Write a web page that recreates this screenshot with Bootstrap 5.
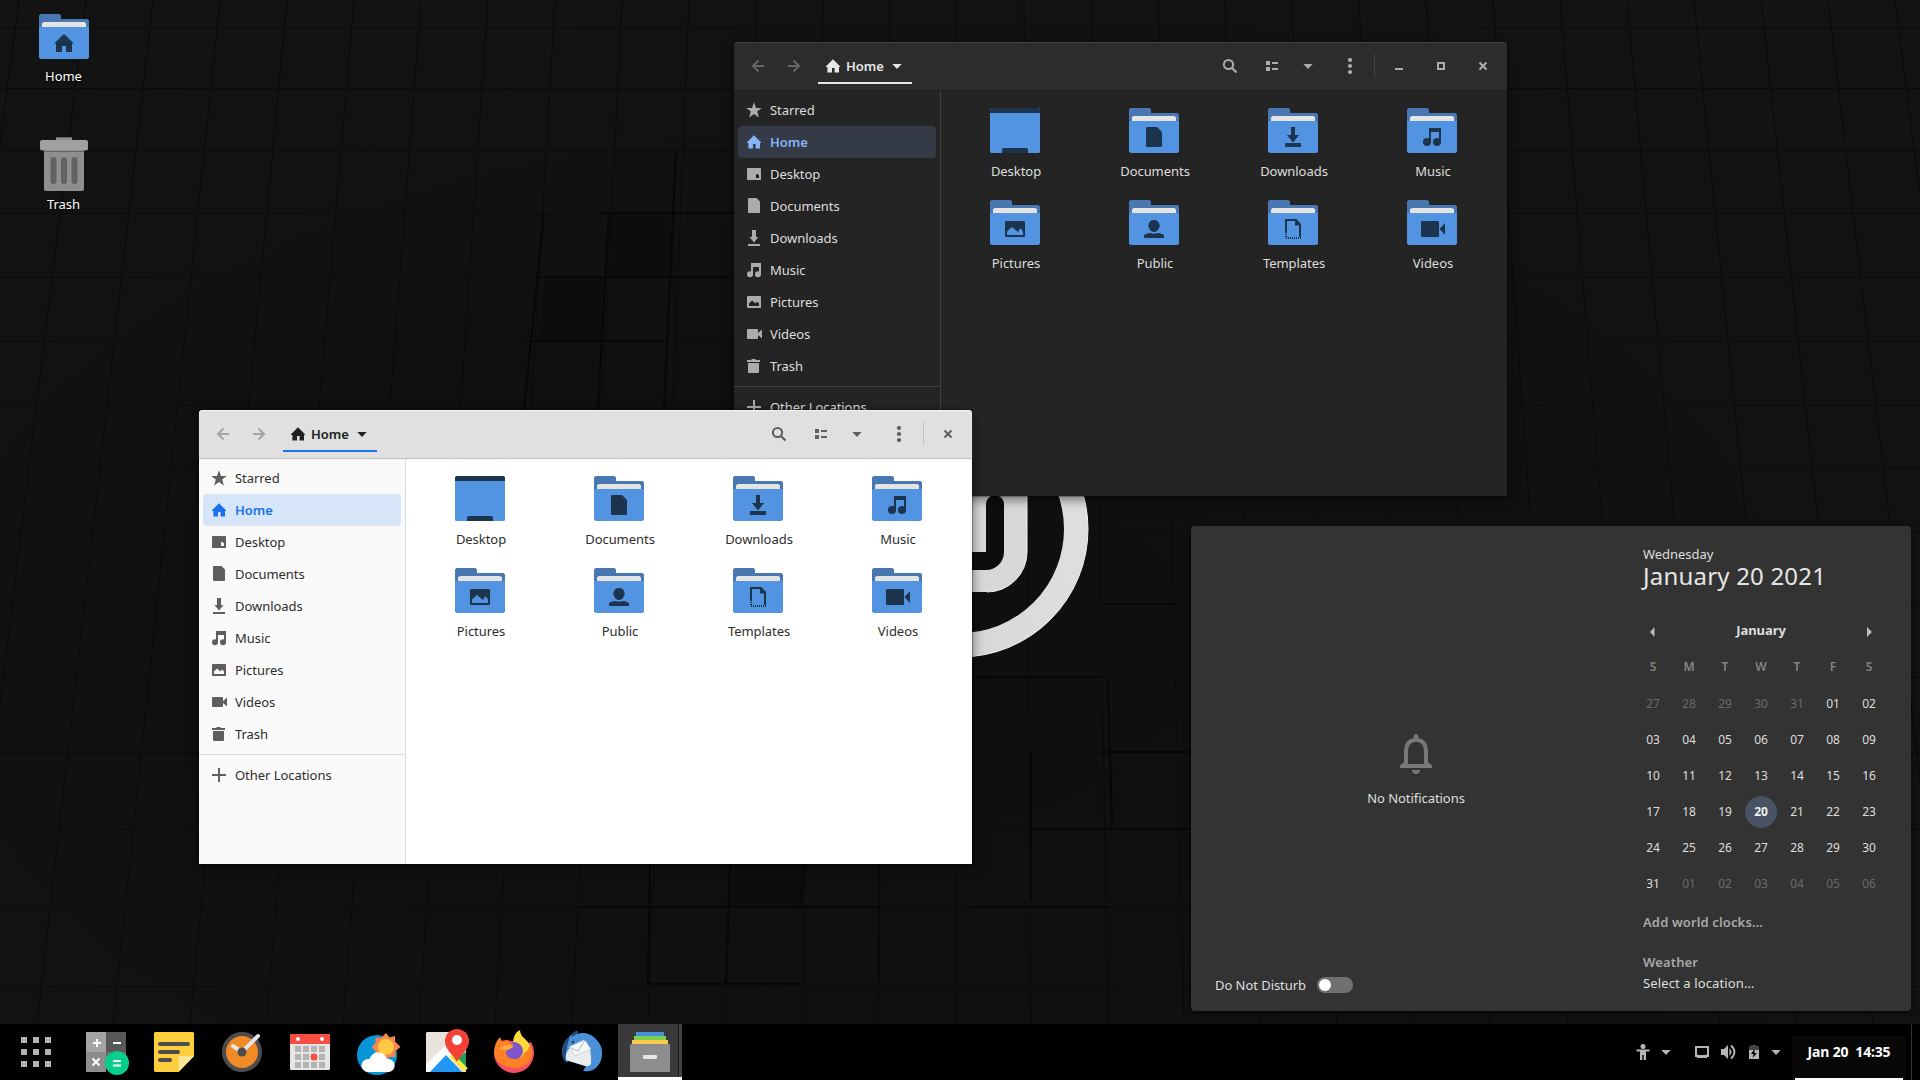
<!DOCTYPE html>
<html lang="en">
<head>
<meta charset="utf-8">
<title>Desktop</title>
<link href="https://cdn.jsdelivr.net/npm/bootstrap@5.3.0/dist/css/bootstrap.min.css" rel="stylesheet">
<style>
body{width:1920px;height:1080px;background:#111;font-family:"Noto Sans",sans-serif;font-size:13px;line-height:20px;letter-spacing:-.05px;color:#dedede}
svg{display:block;flex:none}
.ic{width:16px;height:16px;fill:currentColor}
.wallpaper{inset:0}
.desk-item{width:100px;color:#fff;text-shadow:0 1px 2px #000}
.desk-item span{margin-right:1px}
.desk-home{left:14px;top:14px}
.desk-home span{margin-top:7px}
.desk-trash{left:14px;top:137px}
.desk-trash span{margin-top:2px}
.win{width:773px;height:454px;border-radius:4px 4px 0 0;box-shadow:0 3px 12px rgba(0,0,0,.55),0 0 0 1px rgba(0,0,0,.25)}
.win-dark{left:734px;top:42px;background:#242424;--bar:#2c2c2c;--top:#444;--edge:#202020;--fg:#dedede;--icon:#acacac;--off:#666;--line:#404040;--side:#242424;--sel:#343a46;--selfg:#8ab4f8;--tab:#e6e6e6;--strong:#e6e6e6}
.win-light{left:199px;top:410px;background:#fff;--bar:#e0e0e0;--top:#f4f4f4;--edge:#bcbcbc;--fg:#2d2d2d;--icon:#5f5f5f;--off:#a4a4a4;--line:#dcdcdc;--side:#fafafa;--sel:#d6e5f8;--selfg:#1a73e8;--tab:#1a73e8;--strong:#212121}
.titlebar{height:48px;background:var(--bar);box-shadow:inset 0 1px var(--top),0 1px 1px var(--edge);color:var(--icon);padding:0 3px 0 6px;border-radius:4px 4px 0 0;position:relative;z-index:1}
.hbtn{width:36px;height:36px;display:flex;align-items:center;justify-content:center}
.hbtn.off{color:var(--off)}
.w42{width:42px}.w30{width:30px}
.more{margin-left:6px}
.tab-home{height:36px;width:94px;margin-left:6px;padding:0 7px;color:var(--strong);box-shadow:inset 0 -2px var(--tab);font-weight:600;gap:5px}
.vsep{width:1px;height:24px;background:var(--line);margin:0 3px}
.win-light .vsep{background:#c2c2c2}
.places{width:207px;background:var(--side);border-right:1px solid var(--line);padding-top:4px;color:var(--fg)}
.place{height:32px;margin:0 4px;padding-left:8px;gap:8px;border-radius:4px}
.place svg{color:var(--icon)}
.place.on,.place.on svg{color:var(--selfg)}
.place.on{background:var(--sel);font-weight:600}
.psep{height:1px;background:var(--line);margin:4px 0}
.files{padding:18px 5px 0 4px;color:var(--fg);align-content:flex-start}
.file{width:139px;height:92px}
.fold{width:50px;height:45px}
.files .fold{margin-left:1px;margin-right:1px}
.file .fname{margin:8px 0 0 3px}
.panel{left:1191px;top:526px;width:720px;height:485px;background:#333;border-radius:4px;box-shadow:0 2px 6px rgba(0,0,0,.6)}
.notes{width:444px;padding:0 0 16px 24px}
.empty{padding-right:18px;padding-top:40px}
.empty span{margin-top:14px}
.switch-off{width:36px;height:16px;border-radius:8px;background:#707070;padding:2px;margin-left:11px}
.switch-off i{width:12px;height:12px;border-radius:50%;background:#fff}
.cal{width:252px;padding-top:18px}
.cal .pad{padding-left:8px}
.bigdate{font-size:24px;line-height:28px;letter-spacing:.2px;margin-top:-2px;color:#e6e6e6}
.month{height:36px;margin-top:23px}
.month b{padding-bottom:2px}
.cell{width:36px;height:36px;display:flex;align-items:center;justify-content:center;font-size:12px}
.dow{color:#858585;font-weight:600;margin-bottom:1px}
.dim{color:#6a6a6a}
.today{width:32px;height:32px;border-radius:50%;background:#485264;color:#f0f0f0;font-weight:700}
.soft{color:#a8a8a8;font-weight:600;letter-spacing:.13px}
.clocks{margin-top:10px}
.weather{margin:20px 0 1px}
.place-pick{letter-spacing:.12px}
.dock{left:0;top:1024px;width:1920px;height:56px;background:#000;color:#b6b6b6}
.apps-btn{width:72px;padding-left:21px}
.app{width:68px;height:56px}
.app svg{width:48px;height:48px}
.app-on{width:64px;height:56px;margin-left:2px;background:linear-gradient(90deg,#3a3a3a 60px,#1d1d1d 60px,#1d1d1d 61px,#454545 61px);border-bottom:3px solid #fff;padding:3px 0 0}
.t-person{margin-right:7px}
.t-screen{margin:0 10px 0 20px}
.t-sound{margin-right:10px}
.t-power{margin-right:6px}
.tray{margin-right:8px}
.clockbox{width:114px;height:44px;background:#080808;color:#fff;font-size:14px;font-weight:700;letter-spacing:-.17px;padding:2px 3px 0}
.clockbox .under{height:2px;background:#fff}
.showdesk{width:9px;height:56px;border-left:1px solid #333;margin-left:5px}
</style>
</head>
<body class="overflow-hidden position-relative">

<svg width="0" height="0" class="position-absolute">
<defs>
<symbol id="home" viewBox="0 0 16 16"><path d="M8 1.2 1 8.2V9h1.4v5.4H7V10h2.6v4.4H14V9h1V8.200z"/></symbol>
<symbol id="star" viewBox="0 0 16 16"><path d="M8 .3 10 5.900l5.800.1-4.600 3.600 1.700 5.900L8 12.100 3.100 15.500 4.800 9.600.3 6 6 5.900z"/></symbol>
<symbol id="desk" viewBox="0 0 16 16"><path fill-rule="evenodd" d="M2 2h12a1 1 0 0 1 1 1v10a1 1 0 0 1-1 1H2a1 1 0 0 1-1-1V3a1 1 0 0 1 1-1zm8 6v4h3V9h-1V8z"/></symbol>
<symbol id="doc" viewBox="0 0 16 16"><path d="M3 0h7.500L14 3.500V14a1 1 0 0 1-1 1H3a1 1 0 0 1-1-1V1a1 1 0 0 1 1-1z"/></symbol>
<symbol id="down" viewBox="0 0 16 16"><path d="M6 0h4v7h2.500L8 12.500 3.500 7H6zM2 14h12v2H2z"/></symbol>
<symbol id="music" viewBox="0 0 16 16"><path d="M5 1h10v11h-2V4H7v8H5zM5 2h9v3H5z"/><circle cx="4" cy="12.200" r="3"/><circle cx="12" cy="12.200" r="3"/></symbol>
<symbol id="pic" viewBox="0 0 16 16"><path fill-rule="evenodd" d="M2 2h12a1 1 0 0 1 1 1v10a1 1 0 0 1-1 1H2a1 1 0 0 1-1-1V3a1 1 0 0 1 1-1zm1 10h10V9.500L11 7.500 9.500 9.500 6 6.500 3 9.500z"/></symbol>
<symbol id="vid" viewBox="0 0 16 16"><path d="M2 3h9a1 1 0 0 1 1 1v3l4-3.500v9L12 9v3a1 1 0 0 1-1 1H2a1 1 0 0 1-1-1V4a1 1 0 0 1 1-1z"/></symbol>
<symbol id="bin" viewBox="0 0 16 16"><path d="M1 2h4l1-1h3l1 1h4v2H1zM2 5h11v9a1 1 0 0 1-1 1H3a1 1 0 0 1-1-1z"/></symbol>
<symbol id="plus" viewBox="0 0 16 16"><path d="M7 1h2v6h6v2H9v6H7V9H1V7h6z"/></symbol>
<symbol id="back" viewBox="0 0 16 16"><path d="M8.500 2.500 3 8l5.500 5.500M3 8h11" fill="none" stroke="currentColor" stroke-width="2"/></symbol>
<symbol id="fwd" viewBox="0 0 16 16"><path d="M7.500 2.500 13 8l-5.500 5.500M13 8H2" fill="none" stroke="currentColor" stroke-width="2"/></symbol>
<symbol id="caret" viewBox="0 0 16 16"><path d="M3.300 6h9.400L8 11z"/></symbol>
<symbol id="find" viewBox="0 0 16 16"><circle cx="6.500" cy="6.500" r="4.600" fill="none" stroke="currentColor" stroke-width="2"/><path d="m9.500 9.500 5 5" stroke="currentColor" stroke-width="2.200"/></symbol>
<symbol id="list" viewBox="0 0 16 16"><path d="M2 3h4v4H2zM2 9h4v4H2zM8 4h6v2H8zM8 10h6v2H8z"/></symbol>
<symbol id="dots" viewBox="0 0 16 16"><circle cx="8" cy="2" r="2.100"/><circle cx="8" cy="8" r="2.100"/><circle cx="8" cy="14" r="2.100"/></symbol>
<symbol id="shut" viewBox="0 0 16 16"><path d="m4.500 4.500 7 7m0-7-7 7" stroke="currentColor" stroke-width="2"/></symbol>
<symbol id="maxi" viewBox="0 0 16 16"><path d="M5 5h6v6H5z" fill="none" stroke="currentColor" stroke-width="2"/></symbol>
<symbol id="mini" viewBox="0 0 16 16"><path d="M4 10h8v2H4z"/></symbol>
<symbol id="folder" viewBox="0 0 50 45"><path fill="#4877b1" d="M1.500 0H20.500L22 1.500V5H48.500L50 6.500V20H0V1.500z"/><path fill="#e4e4e4" d="M4.500 8h41L47 9.500V15H3V9.500z"/><path fill="#5294e2" d="M0 13.500.5 13h49l.5.5V43.500L48.500 45h-47L0 43.500z"/></symbol>
<symbol id="f-desktop" viewBox="0 0 50 45"><rect width="50" height="45" rx="1.500" fill="#5294e2"/><path fill="#1d344f" d="M1.500 0h47L50 1.500V5H0V1.500zM12 45v-3.500q0-1.500 1.500-1.500h23q1.500 0 1.500 1.500V45z"/></symbol>
<symbol id="f-home" viewBox="0 0 50 45"><use href="#folder"/><path fill="#1d344f" d="m25 20 10 9.500h-2V38h-6v-6h-4v6h-6v-8.500h-2z"/></symbol>
<symbol id="f-doc" viewBox="0 0 50 45"><use href="#folder"/><path fill="#1d344f" d="M18 19h10l5 5v14q0 1-1 1H18q-1 0-1-1V20q0-1 1-1z"/></symbol>
<symbol id="f-down" viewBox="0 0 50 45"><use href="#folder"/><path fill="#1d344f" d="M23 19h4v8h4l-6 7.500-6-7.500h4zM17 35h16v4H17z"/></symbol>
<symbol id="f-music" viewBox="0 0 50 45"><use href="#folder"/><path fill="#1d344f" d="M22 20h12v14h-2V24h-8v10h-2z"/><circle cx="20" cy="34" r="4" fill="#1d344f"/><circle cx="30" cy="34" r="4" fill="#1d344f"/></symbol>
<symbol id="f-pic" viewBox="0 0 50 45"><use href="#folder"/><path fill="#1d344f" fill-rule="evenodd" d="M16 21h18q1 0 1 1v14q0 1-1 1H16q-1 0-1-1V22q0-1 1-1zm1 14h16v-3.500L30.500 28l-2.500 4-6-5-5 4.500z"/></symbol>
<symbol id="f-pub" viewBox="0 0 50 45"><use href="#folder"/><path fill="#1d344f" d="M25 20c3.300 0 5 2 5.300 4.500l.7 1-.9 2C29.500 30 27.500 32 25 32s-4.500-2-5.100-4.500l-.9-2 .7-1C20 22 21.700 20 25 20zM15 38v-2.500q1-2 6.500-2.500 3.500 1.500 7 0 5.500.5 6.500 2.500V38z"/></symbol>
<symbol id="f-tpl" viewBox="0 0 50 45"><use href="#folder"/><path fill="none" stroke="#1d344f" stroke-width="2" d="M18 32V20h10l4 4.500V37"/><path fill="#1d344f" d="M27 20v5.500h5.500z"/><path fill="none" stroke="#1d344f" stroke-width="2" stroke-dasharray="1 1" d="M18 32v6h15"/></symbol>
<symbol id="f-vid" viewBox="0 0 50 45"><use href="#folder"/><path fill="#1d344f" d="M15 21h16q1 0 1 1v14q0 1-1 1H15q-1 0-1-1V22q0-1 1-1zM38 23v12l-5.500-6z"/></symbol>
</defs>
</svg>

<!-- Wallpaper: tiled wall and round emblem -->
<svg class="wallpaper position-absolute" width="1920" height="1080" viewBox="0 0 1920 1080">
<defs><radialGradient id="wall" cx=".45" cy=".6" r=".7"><stop offset="0" stop-color="#0f0f0f"/><stop offset=".45" stop-color="#101010"/><stop offset="1" stop-color="#131313"/></radialGradient>
<linearGradient id="em" x1="0" x2="1"><stop offset="0" stop-color="#bbb"/><stop offset=".65" stop-color="#d9d9d9"/><stop offset="1" stop-color="#dedede"/></linearGradient></defs>
<rect width="1920" height="1080" fill="url(#wall)"/>
<path stroke="#0b0b0b" stroke-width="1" fill="none" d="M19 0-116 1024M86 0-39 1024M153 0 37 1024M220 0 113 1024M287 0 190 1024M354 0 266 1024M421 0 343 1024M488 0 419 1024M555 0 495 1024M622 0 572 1024M689 0 648 1024M756 0 725 1024M823 0 802 1024M890 0 878 1024M957 0 955 1024M1024 0 1031 1024M1091 0 1108 1024M1158 0 1184 1024M1225 0 1261 1024M1292 0 1337 1024M1359 0 1414 1024M1426 0 1490 1024M1493 0 1567 1024M1560 0 1643 1024M1627 0 1720 1024M1694 0 1796 1024M1761 0 1873 1024M1828 0 1949 1024M1895 0 2026 1024"/>
<path stroke="#0b0b0b" stroke-width="1" fill="none" d="M0 27.500H1920M0 88.500H1920M0 150.500H1920M0 213.500H1920M0 277.500H1920M0 341.500H1920M0 405.500H1920M0 468.500H1920M0 531.500H1920M0 603.500H1920M0 677.500H1920M0 752.500H1920M0 829.500H1920M0 907.500H1920M0 986.500H1920"/>
<path stroke="#070707" stroke-width="2" fill="none" d="M544 213 524 410M609 213 598 410M676 150 664 410M541 277H730M602 213H734M530 341H664M650 864 648 984M730 864 726 984M804 864 800 907M580 907H880M648 984H800M879 864V980M972 677H1101M1103 604H1176M1101 752H1190M1108 680 1112 829M1031 829H1190M972 907H1110M1031 752V900"/>
<path fill="#0b0b0b" opacity=".4" d="M609 213H676L672 277H604zM545 277H605L600 341H538zM735 864H804L802 907H730z"/>
<g fill="none"><circle cx="960" cy="529" r="116" stroke="url(#em)" stroke-width="24"/><circle cx="960" cy="529" r="128" stroke="#f2f2f2"/></g>
<path fill="#d8d8d8" d="M893 440h134v112a40 40 0 0 1-40 40H893z"/><path fill="#0d0d0d" d="M986 552V504a9 9 0 0 1 18 0v48a18 18 0 0 1-18 18H920V552z"/>
<path fill="none" stroke="#f2f2f2" d="M1027 490v62a40 40 0 0 1-40 40"/>
</svg>

<div class="desk-item desk-home position-absolute d-flex flex-column align-items-center">
<svg class="fold"><use href="#f-home"/></svg><span>Home</span>
</div>
<div class="desk-item desk-trash position-absolute d-flex flex-column align-items-center">
<svg width="48" height="55" viewBox="0 0 48 55"><path fill="#8e8e8e" d="M16 0h16v4H16zM4 12h40v40q0 2-2 2H6q-2 0-2-2z"/><path fill="#666" d="M4 13.500h40v1.500H4zM16 0h16v1H16z"/><rect y="3" width="48" height="10.500" rx="2" fill="#a0a0a0"/><g fill="#626262"><rect x="10.500" y="20" width="6" height="27" rx="3"/><rect x="21" y="20" width="6" height="27" rx="3"/><rect x="31.500" y="20" width="6" height="27" rx="3"/></g></svg>
<span>Trash</span>
</div>

<!-- Files, dark -->
<section class="win win-dark position-absolute d-flex flex-column">
<header class="titlebar d-flex align-items-center">
<span class="hbtn off"><svg class="ic"><use href="#back"/></svg></span><span class="hbtn off"><svg class="ic"><use href="#fwd"/></svg></span>
<div class="tab-home d-flex align-items-center"><svg class="ic"><use href="#home"/></svg><span>Home</span><svg class="ic ms-auto"><use href="#caret"/></svg></div>
<span class="hbtn w42 ms-auto"><svg class="ic"><use href="#find"/></svg></span><span class="hbtn w42"><svg class="ic"><use href="#list"/></svg></span><span class="hbtn w30"><svg class="ic"><use href="#caret"/></svg></span>
<span class="hbtn w42 more"><svg class="ic"><use href="#dots"/></svg></span><span class="vsep"></span>
<span class="hbtn w42"><svg class="ic"><use href="#mini"/></svg></span><span class="hbtn w42"><svg class="ic"><use href="#maxi"/></svg></span><span class="hbtn w42"><svg class="ic"><use href="#shut"/></svg></span>
</header>
<div class="d-flex flex-grow-1">
<nav class="places flex-shrink-0">
<div class="place d-flex align-items-center"><svg class="ic"><use href="#star"/></svg>Starred</div>
<div class="place on d-flex align-items-center"><svg class="ic"><use href="#home"/></svg>Home</div>
<div class="place d-flex align-items-center"><svg class="ic"><use href="#desk"/></svg>Desktop</div>
<div class="place d-flex align-items-center"><svg class="ic"><use href="#doc"/></svg>Documents</div>
<div class="place d-flex align-items-center"><svg class="ic"><use href="#down"/></svg>Downloads</div>
<div class="place d-flex align-items-center"><svg class="ic"><use href="#music"/></svg>Music</div>
<div class="place d-flex align-items-center"><svg class="ic"><use href="#pic"/></svg>Pictures</div>
<div class="place d-flex align-items-center"><svg class="ic"><use href="#vid"/></svg>Videos</div>
<div class="place d-flex align-items-center"><svg class="ic"><use href="#bin"/></svg>Trash</div>
<div class="psep"></div>
<div class="place d-flex align-items-center"><svg class="ic"><use href="#plus"/></svg>Other Locations</div>
</nav>
<main class="files d-flex flex-wrap flex-grow-1">
<div class="file d-flex flex-column align-items-center"><svg class="fold"><use href="#f-desktop"/></svg><span class="fname">Desktop</span></div>
<div class="file d-flex flex-column align-items-center"><svg class="fold"><use href="#f-doc"/></svg><span class="fname">Documents</span></div>
<div class="file d-flex flex-column align-items-center"><svg class="fold"><use href="#f-down"/></svg><span class="fname">Downloads</span></div>
<div class="file d-flex flex-column align-items-center"><svg class="fold"><use href="#f-music"/></svg><span class="fname">Music</span></div>
<div class="file d-flex flex-column align-items-center"><svg class="fold"><use href="#f-pic"/></svg><span class="fname">Pictures</span></div>
<div class="file d-flex flex-column align-items-center"><svg class="fold"><use href="#f-pub"/></svg><span class="fname">Public</span></div>
<div class="file d-flex flex-column align-items-center"><svg class="fold"><use href="#f-tpl"/></svg><span class="fname">Templates</span></div>
<div class="file d-flex flex-column align-items-center"><svg class="fold"><use href="#f-vid"/></svg><span class="fname">Videos</span></div>
</main>
</div>
</section>

<!-- Files, light -->
<section class="win win-light position-absolute d-flex flex-column">
<header class="titlebar d-flex align-items-center">
<span class="hbtn off"><svg class="ic"><use href="#back"/></svg></span><span class="hbtn off"><svg class="ic"><use href="#fwd"/></svg></span>
<div class="tab-home d-flex align-items-center"><svg class="ic"><use href="#home"/></svg><span>Home</span><svg class="ic ms-auto"><use href="#caret"/></svg></div>
<span class="hbtn w42 ms-auto"><svg class="ic"><use href="#find"/></svg></span><span class="hbtn w42"><svg class="ic"><use href="#list"/></svg></span><span class="hbtn w30"><svg class="ic"><use href="#caret"/></svg></span>
<span class="hbtn w42 more"><svg class="ic"><use href="#dots"/></svg></span><span class="vsep"></span>
<span class="hbtn w42"><svg class="ic"><use href="#shut"/></svg></span>
</header>
<div class="d-flex flex-grow-1">
<nav class="places flex-shrink-0">
<div class="place d-flex align-items-center"><svg class="ic"><use href="#star"/></svg>Starred</div>
<div class="place on d-flex align-items-center"><svg class="ic"><use href="#home"/></svg>Home</div>
<div class="place d-flex align-items-center"><svg class="ic"><use href="#desk"/></svg>Desktop</div>
<div class="place d-flex align-items-center"><svg class="ic"><use href="#doc"/></svg>Documents</div>
<div class="place d-flex align-items-center"><svg class="ic"><use href="#down"/></svg>Downloads</div>
<div class="place d-flex align-items-center"><svg class="ic"><use href="#music"/></svg>Music</div>
<div class="place d-flex align-items-center"><svg class="ic"><use href="#pic"/></svg>Pictures</div>
<div class="place d-flex align-items-center"><svg class="ic"><use href="#vid"/></svg>Videos</div>
<div class="place d-flex align-items-center"><svg class="ic"><use href="#bin"/></svg>Trash</div>
<div class="psep"></div>
<div class="place d-flex align-items-center"><svg class="ic"><use href="#plus"/></svg>Other Locations</div>
</nav>
<main class="files d-flex flex-wrap flex-grow-1">
<div class="file d-flex flex-column align-items-center"><svg class="fold"><use href="#f-desktop"/></svg><span class="fname">Desktop</span></div>
<div class="file d-flex flex-column align-items-center"><svg class="fold"><use href="#f-doc"/></svg><span class="fname">Documents</span></div>
<div class="file d-flex flex-column align-items-center"><svg class="fold"><use href="#f-down"/></svg><span class="fname">Downloads</span></div>
<div class="file d-flex flex-column align-items-center"><svg class="fold"><use href="#f-music"/></svg><span class="fname">Music</span></div>
<div class="file d-flex flex-column align-items-center"><svg class="fold"><use href="#f-pic"/></svg><span class="fname">Pictures</span></div>
<div class="file d-flex flex-column align-items-center"><svg class="fold"><use href="#f-pub"/></svg><span class="fname">Public</span></div>
<div class="file d-flex flex-column align-items-center"><svg class="fold"><use href="#f-tpl"/></svg><span class="fname">Templates</span></div>
<div class="file d-flex flex-column align-items-center"><svg class="fold"><use href="#f-vid"/></svg><span class="fname">Videos</span></div>
</main>
</div>
</section>

<!-- Notifications and calendar -->
<section class="panel position-absolute d-flex">
<div class="notes d-flex flex-column">
<div class="empty flex-grow-1 d-flex flex-column align-items-center justify-content-center">
<svg width="32" height="40" viewBox="0 0 32 40" fill="#787878"><path fill-rule="evenodd" d="M16 0q2.500 0 2.500 4Q28 6 28 17v11l4 3.500V34H0v-2.500L4 28V17Q4 6 13.500 4 13.500 0 16 0zm0 8Q8 8 8 17v13h16V17Q24 8 16 8z"/><path d="M12 36h8q0 4-4 4t-4-4z"/></svg>
<span>No Notifications</span>
</div>
<div class="d-flex align-items-center"><span>Do Not Disturb</span><span class="switch-off d-flex"><i></i></span></div>
</div>
<div class="cal">
<div class="pad">Wednesday</div>
<div class="pad bigdate text-nowrap">January 20 2021</div>
<div class="month d-flex align-items-center">
<span class="cell"><svg width="16" height="16"><path fill="#bcbcbc" d="M9.500 4v10L5 9z"/></svg></span><b class="flex-grow-1 text-center">January</b><span class="cell"><svg width="16" height="16"><path fill="#bcbcbc" d="M6 4v10l5-5z"/></svg></span></div>
<div class="dow d-flex"><span class="cell">S</span><span class="cell">M</span><span class="cell">T</span><span class="cell">W</span><span class="cell">T</span><span class="cell">F</span><span class="cell">S</span></div>
<div class="d-flex"><span class="cell dim">27</span><span class="cell dim">28</span><span class="cell dim">29</span><span class="cell dim">30</span><span class="cell dim">31</span><span class="cell">01</span><span class="cell">02</span></div>
<div class="d-flex"><span class="cell">03</span><span class="cell">04</span><span class="cell">05</span><span class="cell">06</span><span class="cell">07</span><span class="cell">08</span><span class="cell">09</span></div>
<div class="d-flex"><span class="cell">10</span><span class="cell">11</span><span class="cell">12</span><span class="cell">13</span><span class="cell">14</span><span class="cell">15</span><span class="cell">16</span></div>
<div class="d-flex"><span class="cell">17</span><span class="cell">18</span><span class="cell">19</span><span class="cell"><b class="today d-flex align-items-center justify-content-center">20</b></span><span class="cell">21</span><span class="cell">22</span><span class="cell">23</span></div>
<div class="d-flex"><span class="cell">24</span><span class="cell">25</span><span class="cell">26</span><span class="cell">27</span><span class="cell">28</span><span class="cell">29</span><span class="cell">30</span></div>
<div class="d-flex"><span class="cell">31</span><span class="cell dim">01</span><span class="cell dim">02</span><span class="cell dim">03</span><span class="cell dim">04</span><span class="cell dim">05</span><span class="cell dim">06</span></div>
<div class="pad soft clocks">Add world clocks…</div>
<div class="pad soft weather">Weather</div>
<div class="pad place-pick">Select a location…</div>
</div>
</section>

<!-- Taskbar -->
<footer class="dock position-absolute d-flex align-items-center">
<div class="apps-btn"><svg width="30" height="30" fill="#b4b4b4"><path d="M0 0h6v6H0zM12 0h6v6h-6zM24 0h6v6h-6zM0 12h6v6H0zM12 12h6v6h-6zM24 12h6v6h-6zM0 24h6v6H0zM12 24h6v6h-6zM24 24h6v6h-6z"/></svg></div>
<div class="app d-flex align-items-center justify-content-center"><svg viewBox="0 0 48 48"><path fill="#a4a4a4" d="M4 4h20v20H4z"/><path fill="#585858" d="M24 4h20v20H24z"/><path fill="#8d8d8d" d="M4 24h20v20H4z"/><path fill="#6d6d6d" d="M24 24h20v16H24z"/><circle cx="35" cy="35" r="12" fill="#08ce8b"/><path stroke="#fff" stroke-width="2" d="M11 15h8M15 11v8M31 15h8M10.500 30.500l7 7m0-7-7 7M31 33h8M31 37.500h8"/></svg></div>
<div class="app d-flex align-items-center justify-content-center"><svg viewBox="0 0 48 48"><path fill="#ffce3c" d="M5 4h38l1 1v23L28.500 44H5l-1-1V5z"/><path fill="#ffe59a" d="M44 28 28.500 44V29l1-1z"/><path stroke="#4d4d4d" stroke-width="4" stroke-linecap="round" d="M10 16h28M10 24h18M10 32h10"/></svg></div>
<div class="app d-flex align-items-center justify-content-center"><svg viewBox="0 0 48 48"><circle cx="24" cy="24" r="18" fill="#f28b25" stroke="#4d4d4d" stroke-width="4"/><path stroke="#e4e4e4" stroke-width="4" stroke-linecap="round" d="M24 24 40 8M24 24l-9-6"/><circle cx="24" cy="24" r="4.500" fill="#4d4d4d"/></svg></div>
<div class="app d-flex align-items-center justify-content-center"><svg viewBox="0 0 48 48"><rect x="4" y="6" width="40" height="36" rx="1.500" fill="#e5e5e5"/><path fill="#f84d43" d="M5.500 6h37L44 7.500V16H4V7.500z"/><circle cx="12" cy="11" r="2" fill="#fff"/><circle cx="36" cy="11" r="2" fill="#fff"/><path stroke="#b4b4b4" stroke-width="6" stroke-dasharray="6 2" d="M9 21h30M9 29h30M9 37h30"/><circle cx="28" cy="29" r="3.500" fill="#f84d43"/></svg></div>
<div class="app d-flex align-items-center justify-content-center"><svg viewBox="0 0 48 48"><circle cx="23" cy="27" r="20" fill="#0695d6"/><path fill="#fa874a" d="m32 5 3.500 4.500L41 8v5.500l5.500 5.500-5 4v6h-6L32 33l-4.500-4h-6v-6L17.500 19l4-4V9.500h6z"/><circle cx="32" cy="19" r="8" fill="#ffc845"/><path fill="#fff" d="M14 44a6.500 6.500 0 0 1 0-13q1 0 1.500.1a9 9 0 0 1 17.500 0h2a6.500 6.500 0 0 1 0 12.900z"/></svg></div>
<div class="app d-flex align-items-center justify-content-center"><svg viewBox="0 0 48 48"><path fill="#e8e4dd" d="M5 4h38l1 1v39H4V5z"/><path fill="#fff" d="M4 36 24 17l10 10-8 17H4z"/><path fill="#249e5a" d="M44 24v17L33 31z"/><path fill="#2196f3" d="m24 27 16 17H8z"/><path stroke="#ffeb3b" stroke-width="5" d="m29 27 15 15"/><path fill="#f44336" d="M35 34C31 26 23 22 23 13a12 12 0 0 1 24 0c0 9-8 13-12 21z"/><circle cx="35" cy="12" r="5" fill="#fff"/></svg></div>
<div class="app d-flex align-items-center justify-content-center"><svg viewBox="0 0 48 48"><path fill="#f74e62" d="M4 26q0-8 5-13l8-1 19 4 5-2q3 5 3 10a20 20 0 0 1-40 2z"/><path fill="#ffd93b" d="M30 2q0 5 5 9 7 6 6 14-2 11-14 12l-4-21q0-11 7-14z"/><circle cx="24" cy="23" r="9" fill="#8055c9"/><path fill="#ff8025" d="M4 25Q4 15 10 9l2 5 5-2q2 3 6 4-1 3-5 5-2 1-2 4 1 6 9 6 7 0 9-6 5-3 6-8 6 9-2 18-7 6-15 5Q6 38 4 25z"/><path fill="#ffad38" d="M9 21q6-6 15-3-2 3-7 4-5 0-8-1z"/></svg></div>
<div class="app d-flex align-items-center justify-content-center"><svg viewBox="0 0 48 48"><path fill="#4a90d9" d="M13 7q4-4 7-4l-1 3q10-3 18 4 7 7 7 15 0 12-9 17-5 2-9 1l-8-5Q4 34 4 24q0-10 9-17z"/><path fill="#244a77" d="M12 8 9 18l-1 8q-2 5 2 11Q4 32 4 24q0-10 8-16zM20 3q-1 4-7 6l1-3q3-3 6-3z"/><path fill="#000" d="m10 33 18 5-3 5 1 5H8V36z"/><path fill="#e9ebed" d="m12 20 16-7q6 8 5 23-2 3-6 2L8 32q-1-8 4-12z"/><path fill="#f6f7f8" stroke="#c3c7cc" stroke-width=".7" d="m11 19 15-7 7 9-16 7z"/><path fill="none" stroke="#b4b9bf" d="m11 19 9 4 7-11"/><path fill="#4a90d9" d="M32 14q6 6 4 15 0 8-5 13 12-3 13-17 0-8-6-13z"/><circle cx="15" cy="14" r="1.200" fill="#1c2f4a"/></svg></div>
<div class="app-on d-flex align-items-center justify-content-center"><svg width="48" height="48" viewBox="0 0 48 48"><path fill="#4a90d9" d="M10 4h28v6H10z"/><path fill="#7cd14e" d="M8 8h32v6H8z"/><path fill="#fbc94e" d="M6 12h36v6H6z"/><rect x="4" y="16" width="40" height="28" rx="1.500" fill="#8e8e8e"/><rect x="17" y="27" width="14" height="4" rx="1" fill="#e6e6e6"/></svg></div>
<div class="tray d-flex align-items-center ms-auto">
<svg class="ic t-person" viewBox="0 0 16 16"><circle cx="8" cy="2.500" r="2.500"/><path d="M1.500 5.500h13v2H11V16H8.700v-5H7.300v5H5V7.500H1.500z"/></svg>
<svg class="ic"><use href="#caret"/></svg>
<svg class="ic t-screen" viewBox="0 0 16 16"><path fill-rule="evenodd" d="M1 2h14v11h-2v1H3v-1H1zm2 2v6l1 1h8l1-1V4z"/></svg>
<svg class="ic t-sound" viewBox="0 0 16 16"><path d="M1 5h3l4-4v14l-4-4H1zM9.500 4q4 4 0 8z"/><path d="M11 1.500q7 6.500 0 13" fill="none" stroke="currentColor" stroke-width="1.800"/></svg>
<svg class="ic t-power" viewBox="0 0 16 16"><path fill="#444" d="M5 1h5v1h3v5H3V2h2z"/><path d="M3 6h10v9H3z"/><path fill="#000" d="M8.500 5 5 10h2.500l-1 4L11 9H8.500z"/></svg>
<svg class="ic"><use href="#caret"/></svg>
</div>
<div class="clockbox align-self-end d-flex flex-column flex-shrink-0"><div class="flex-grow-1 text-center pt-1 text-nowrap">Jan 20 &nbsp;14:35</div><div class="under"></div></div>
<div class="showdesk"></div>
</footer>

<script src="https://cdn.jsdelivr.net/npm/bootstrap@5.3.0/dist/js/bootstrap.bundle.min.js"></script>
</body>
</html>
